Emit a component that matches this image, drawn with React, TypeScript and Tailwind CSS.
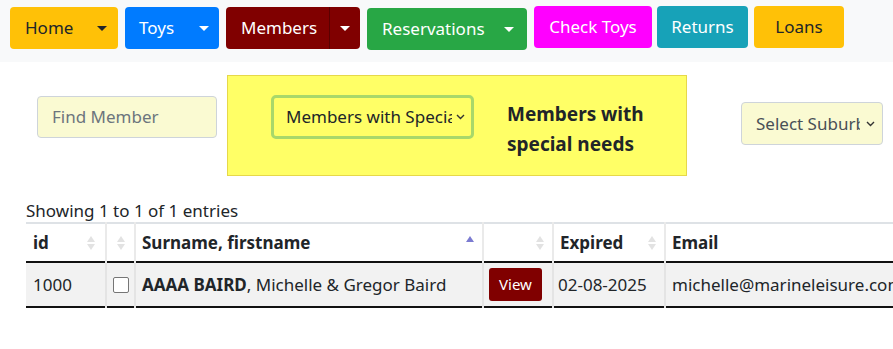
import React from "react";

const font = { fontFamily: '"Noto Sans", "Open Sans", sans-serif' };

const Caret = ({ light }: { light?: boolean }) => (
  <span
    className={`inline-block w-0 h-0 border-l-[5px] border-r-[5px] border-t-[5px] border-l-transparent border-r-transparent ${
      light ? "border-t-white" : "border-t-[#212529]"
    }`}
  />
);

const SortIcon = ({ active }: { active?: boolean }) => (
  <span className="flex flex-col items-center gap-[2px]">
    <span
      className={`w-0 h-0 border-l-[4px] border-r-[4px] border-b-[6px] border-l-transparent border-r-transparent ${
        active ? "border-b-[#7b7bd1]" : "border-b-[#e2e2e2]"
      }`}
    />
    <span
      className={`w-0 h-0 border-l-[4px] border-r-[4px] border-t-[6px] border-l-transparent border-r-transparent ${
        active ? "border-t-transparent" : "border-t-[#e2e2e2]"
      }`}
    />
  </span>
);

const Chevron = () => (
  <svg width="9" height="6" viewBox="0 0 9 6" className="shrink-0">
    <path d="M1 1l3.5 3.5L8 1" fill="none" stroke="#333" strokeWidth="1.4" />
  </svg>
);

export default function App() {
  return (
    <div className="w-[893px] h-[349px] overflow-hidden bg-white text-[#212529]" style={font}>
      {/* nav */}
      <div className="h-[62px] bg-[#f8f9fa] flex items-start pl-[10px] pt-[7px] gap-[7px] text-[17px]">
        <div className="w-[108px] h-[42px] rounded-[4px] bg-[#ffc107] flex items-center justify-between pl-[15px] pr-[11px] text-[#212529]">
          <span>Home</span>
          <Caret />
        </div>
        <div className="w-[94px] h-[42px] rounded-[4px] bg-[#007bff] flex items-center justify-between pl-[14px] pr-[10px] text-white">
          <span>Toys</span>
          <Caret light />
        </div>
        <div className="w-[134px] h-[42px] rounded-[4px] bg-[#800000] flex items-center text-white overflow-hidden">
          <span className="pl-[15px] w-[103px]">Members</span>
          <span className="h-full border-l border-[#5a0000] flex-1 flex items-center justify-center">
            <Caret light />
          </span>
        </div>
        <div className="w-[160px] h-[42px] mt-[1px] rounded-[4px] bg-[#28a745] flex items-center justify-between pl-[15px] pr-[13px] text-white">
          <span>Reservations</span>
          <Caret light />
        </div>
        <div className="w-[118px] h-[42px] -mt-[1px] rounded-[4px] bg-[#ff00ff] flex items-center justify-center text-white">
          Check Toys
        </div>
        <div className="w-[91px] h-[42px] -mt-[1px] -ml-[2px] rounded-[4px] bg-[#17a2b8] flex items-center justify-center text-white">
          Returns
        </div>
        <div className="w-[90px] h-[42px] -mt-[1px] -ml-[1px] rounded-[4px] bg-[#ffc107] flex items-center justify-center text-[#212529]">
          Loans
        </div>
      </div>

      {/* filters */}
      <div className="flex items-start pt-[13px]">
        <div className="ml-[37px] mt-[21px] w-[180px] h-[42px] rounded-[4px] border border-[#ced4da] bg-[#fafad2] flex items-center pl-[14px] text-[17px] text-[#6c757d]">
          Find Member
        </div>
        <div className="ml-[10px] w-[460px] h-[101px] bg-[#ffff66] border border-[#e6d84a] flex items-start">
          <div className="ml-[43px] mt-[19px] w-[203px] h-[44px] rounded-[5px] border-[3px] border-[#a8d86a] bg-[#ffff66] flex items-center justify-between pl-[12px] pr-[6px] text-[17px]">
            <span className="whitespace-nowrap overflow-hidden w-[166px]">Members with Special Needs</span>
            <Chevron />
          </div>
          <div className="ml-[33px] mt-[23px] text-[19px] font-bold leading-[30px]">
            Members with
            <br />
            special needs
          </div>
        </div>
        <div className="ml-[54px] mt-[27px] w-[142px] h-[43px] rounded-[4px] border border-[#ced4da] bg-[#fafad2] flex items-center justify-between pl-[14px] pr-[7px] text-[17px] text-[#495057]">
          <span className="whitespace-nowrap overflow-hidden w-[104px]">Select Suburb</span>
          <Chevron />
        </div>
      </div>

      {/* table */}
      <div className="pl-[26px] mt-[23px]">
        <div className="text-[17px] leading-[23px] h-[23px]">Showing 1 to 1 of 1 entries</div>
        <table className="border-collapse text-[17px] w-[900px] table-fixed">
          <colgroup>
            <col className="w-[80px]" />
            <col className="w-[29px]" />
            <col className="w-[348px]" />
            <col className="w-[70px]" />
            <col className="w-[112px]" />
            <col className="w-[261px]" />
          </colgroup>
          <thead>
            <tr className="h-[39px] border-t-2 border-[#dee2e6] border-b-2 border-b-[#111]">
              <th className="text-left pl-[7px] pr-[10px] border-r-2 border-[#eaeaea]">
                <div className="flex items-center justify-between">
                  <span>id</span>
                  <SortIcon />
                </div>
              </th>
              <th className="border-r-2 border-[#eaeaea]">
                <div className="flex justify-center">
                  <SortIcon />
                </div>
              </th>
              <th className="text-left pl-[6px] pr-[8px] border-r-2 border-[#eaeaea]">
                <div className="flex items-center justify-between">
                  <span>Surname, firstname</span>
                  <SortIcon active />
                </div>
              </th>
              <th className="pr-[8px] border-r-2 border-[#eaeaea]">
                <div className="flex justify-end">
                  <SortIcon />
                </div>
              </th>
              <th className="text-left pl-[6px] pr-[8px] border-r-2 border-[#eaeaea]">
                <div className="flex items-center justify-between">
                  <span>Expired</span>
                  <SortIcon />
                </div>
              </th>
              <th className="text-left pl-[6px]">Email</th>
            </tr>
          </thead>
          <tbody>
            <tr className="h-[45px] bg-[#f2f2f2] border-b-2 border-[#111]">
              <td className="pl-[7px] border-r-2 border-[#e4e4e4]">1000</td>
              <td className="border-r-2 border-[#e4e4e4]">
                <div className="flex justify-center">
                  <span className="w-[16px] h-[16px] rounded-[2px] border border-[#767676] bg-white" />
                </div>
              </td>
              <td className="pl-[6px] border-r-2 border-[#e4e4e4] whitespace-nowrap">
                <b>AAAA BAIRD</b>, Michelle &amp; Gregor Baird
              </td>
              <td className="border-r-2 border-[#e4e4e4]">
                <div className="ml-[5px] w-[53px] h-[33px] rounded-[3px] bg-[#800000] text-white text-[15px] flex items-center justify-center">
                  View
                </div>
              </td>
              <td className="pl-[4px] border-r-2 border-[#e4e4e4] whitespace-nowrap">02-08-2025</td>
              <td className="pl-[6px] whitespace-nowrap">michelle@marineleisure.com</td>
            </tr>
          </tbody>
        </table>
      </div>
    </div>
  );
}
